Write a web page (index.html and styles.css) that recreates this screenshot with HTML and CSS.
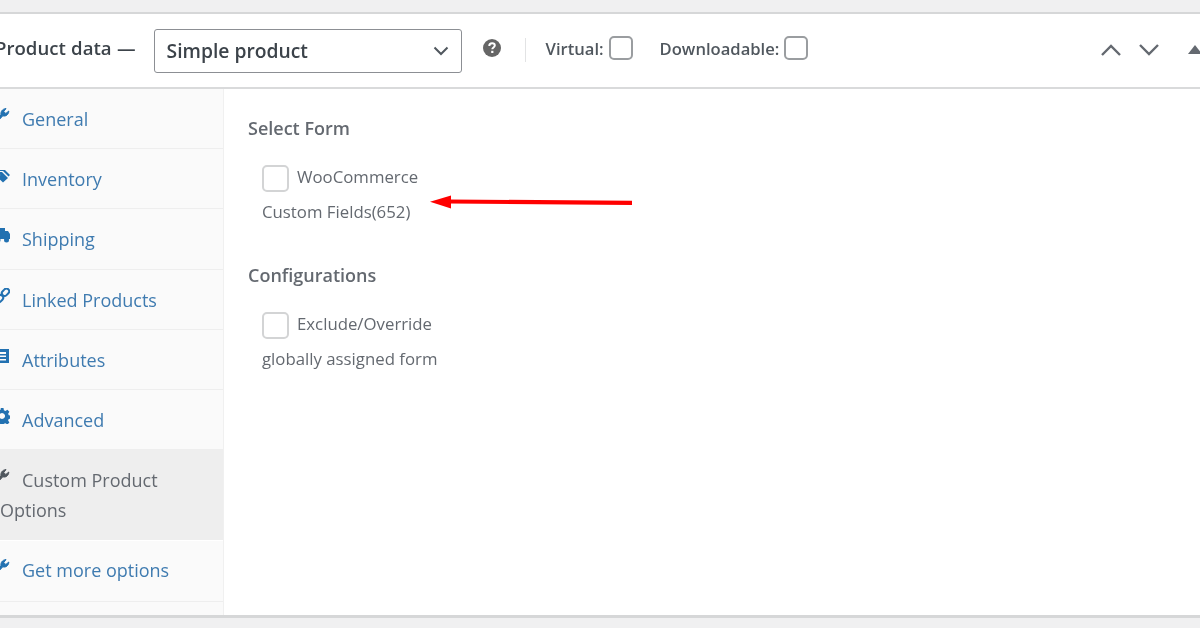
FILE: index.html
```html
<!DOCTYPE html>
<html lang="en">
<head>
<meta charset="utf-8">
<title>Product data</title>
<link rel="stylesheet" href="styles.css">
</head>
<body>
<div class="shot">
  <section class="panel">
    <header class="bar">
      <h2 class="bar-title">Product data —</h2>
      <div class="select">
        <span class="select-value">Simple product</span>
        <svg class="select-caret" viewBox="0 0 16 10" width="16" height="10"><path d="M1.500 1.500 8 8l6.500-6.500" fill="none" stroke="#50575e" stroke-width="2"/></svg>
      </div>
      <svg class="help" viewBox="0 0 18 18" width="18" height="18"><circle cx="9" cy="9" r="9" fill="#666"/><path d="M6.300 7c0-1.700 1.200-2.700 2.800-2.700s2.700 1 2.700 2.300c0 1.800-2.500 1.900-2.500 3.600" fill="none" stroke="#fff" stroke-width="2"/><rect x="8.200" y="11.800" width="2.200" height="2.200" fill="#fff"/></svg>
      <span class="bar-sep"></span>
      <label class="check-label">Virtual:<span class="box"></span></label>
      <label class="check-label second">Downloadable:<span class="box"></span></label>
      <div class="arrows">
        <svg viewBox="0 0 22 14" width="22" height="14"><path d="M2 12 11 3l9 9" fill="none" stroke="#646970" stroke-width="2.400"/></svg>
        <svg viewBox="0 0 22 14" width="22" height="14"><path d="M2 2l9 9 9-9" fill="none" stroke="#646970" stroke-width="2.400"/></svg>
        <svg class="arrow-toggle" viewBox="0 0 14 10" width="14" height="10"><path d="M7 0l7 9H0z" fill="#646970"/></svg>
      </div>
    </header>
    <div class="body">
      <nav class="tabs">
        <a class="tab"><svg class="ico wrench" viewBox="0 0 16 16"><path d="M1 14 7 8c-.6-3 1-6 5-6.500L9.800 4.500l2 2 3-2.500c0 3.500-3 5.800-6 4.800L3 15z"/></svg>General</a>
        <a class="tab"><svg class="ico" viewBox="0 0 16 16"><path d="M6 3h5l5 5-1.500 1.500L9 4H6zM2 5h6l6 6-5 4.500L2 9zm3 1.800a1.200 1.200 0 1 0 .01 0z" fill-rule="evenodd"/></svg>Inventory</a>
        <a class="tab"><svg class="ico" viewBox="0 0 16 16"><path d="M0 1h11v11H0zM11 4h3l2 3v5h-5z"/><circle cx="4" cy="13" r="2.500"/><circle cx="12.500" cy="13" r="2.500"/></svg>Shipping</a>
        <a class="tab"><svg class="ico" viewBox="0 0 16 16"><g fill="none" stroke="#2271b1" stroke-width="2"><rect x="7.500" y="1.500" width="8" height="5.500" rx="2.700" transform="rotate(-45 11.500 4.200)"/><rect x="1.500" y="8" width="8" height="5.500" rx="2.700" transform="rotate(-45 5.500 10.700)"/></g></svg>Linked Products</a>
        <a class="tab"><svg class="ico" viewBox="0 0 16 16"><path d="M1 1h14v14H1zm3 3v2h8V4zm0 3.500v1.500h8V7.500zM4 11v1.500h8V11z" fill-rule="evenodd"/></svg>Attributes</a>
        <a class="tab"><svg class="ico" viewBox="0 0 16 16"><path d="M6.500 0h3l.4 2.300 1.500.7 2-1.300 2 2-1.300 2 .7 1.500 2.200.4v3l-2.300.4-.6 1.500 1.300 2-2 2-2-1.300-1.500.6-.4 2.300h-3l-.4-2.300-1.500-.6-2 1.300-2-2 1.300-2-.6-1.500L0 9.500v-3l2.300-.4.600-1.500-1.300-2 2-2 2 1.300 1.500-.7zM8 5a3 3 0 1 0 .01 0z" fill-rule="evenodd"/></svg>Advanced</a>
        <a class="tab tab-active"><svg class="ico ico-dark wrench" viewBox="0 0 16 16"><path d="M1 14 7 8c-.6-3 1-6 5-6.500L9.800 4.500l2 2 3-2.500c0 3.500-3 5.800-6 4.800L3 15z"/></svg>Custom Product Options</a>
        <a class="tab"><svg class="ico wrench" viewBox="0 0 16 16"><path d="M1 14 7 8c-.6-3 1-6 5-6.500L9.800 4.500l2 2 3-2.500c0 3.500-3 5.800-6 4.800L3 15z"/></svg>Get more options</a>
      </nav>
      <main class="content">
        <h3 class="group-title">Select Form</h3>
        <label class="option"><span class="box light"></span><span>WooCommerce</span></label>
        <p class="option-note">Custom Fields(652)</p>
        <h3 class="group-title second-group">Configurations</h3>
        <label class="option"><span class="box light"></span><span>Exclude/Override</span></label>
        <p class="option-note">globally assigned form</p>
        <svg class="red-arrow" viewBox="0 0 204 16" width="204" height="16"><path d="M20 5.500 203 6.700v4.300L20 9.500z" fill="#f00"/><path d="M1 7.700 22 1.500v13z" fill="#f00"/></svg>
      </main>
    </div>
  </section>
</div>
</body>
</html>
```
FILE: styles.css
```css
* { box-sizing: border-box; }
html, body { margin: 0; height: 100%; }
body {
  background: #f0f0f1;
  overflow: hidden;
  font-family: "Open Sans", "Noto Sans", sans-serif;
  color: #50575e;
}
.shot {
  width: 1230px;
  height: 628px;
  margin-left: -10px;
  padding-top: 12px;
  filter: blur(0.55px);
}
.panel {
  height: 606px;
  background: #fff;
  border-top: 2px solid #d6d7d8;
  border-bottom: 3px solid #d6d7d8;
  display: flex;
  flex-direction: column;
}
.bar {
  height: 75px;
  flex: none;
  border-bottom: 2px solid #d9dadb;
  display: flex;
  align-items: center;
  padding-left: 5px;
}
.bar-title {
  margin: 0 18px 6px 0;
  font-size: 18.600px;
  font-weight: 600;
  word-spacing: 0.5px;
  color: #3c434a;
  white-space: nowrap;
}
.select {
  width: 308px;
  height: 44px;
  flex: none;
  margin-top: 1px;
  border: 1.500px solid #8c8f94;
  border-radius: 3px;
  display: flex;
  align-items: center;
  justify-content: space-between;
  padding: 0 12px;
  font-size: 19.300px;
  font-weight: 600;
  color: #3c434a;
}
.select-value { margin-bottom: 2px; }
.help { margin: 0 0 6px 21px; flex: none; }
.bar-sep {
  width: 1px;
  height: 24px;
  margin: 0 20px 2px 24px;
  background: #e2e3e4;
}
.check-label {
  display: flex;
  align-items: center;
  gap: 5px;
  font-size: 16.600px;
  font-weight: 600;
  color: #50575e;
  margin-bottom: 5px;
  white-space: nowrap;
}
.second { margin-left: 27px; }
.box {
  width: 24px;
  height: 24px;
  flex: none;
  border: 2px solid #9a9da0;
  border-radius: 5px;
  background: #fff;
}
.box.light { border-color: #d3d4d5; width: 27px; height: 27px; }
.arrows {
  margin-left: auto;
  display: flex;
  align-items: center;
  gap: 16px;
  padding-right: 18px;
  margin-bottom: 2px;
}
.arrow-toggle { margin-left: 12px; }
.body { flex: 1; display: flex; min-height: 0; }
.tabs {
  width: 234px;
  flex: none;
  background: #fafafa;
  border-right: 1px solid #f0f0f0;
  display: flex;
  flex-direction: column;
}
.tab {
  min-height: 60.200px;
  padding: 15px 12px 14px 10px;
  line-height: 30px;
  font-size: 18px;
  color: #3f7bb0;
  border-bottom: 1px solid #eeeeee;
}
.tab-active {
  min-height: 91.200px;
  background: #eeeeee;
  color: #646970;
  border-bottom-color: #fff;
}
.tab-active + .tab { padding-top: 14px; }
.ico {
  width: 16px;
  height: 16px;
  margin: 0 12px 0 -6px;
  vertical-align: 3px;
  fill: #2271b1;
}
.wrench { stroke: #2271b1; stroke-width: 1; }
.ico-dark { fill: #50575e; stroke: #50575e; }
.content {
  flex: 1;
  position: relative;
  padding: 27px 0 0 24px;
  font-size: 16.800px;
  color: #646970;
}
.group-title {
  margin: 0 0 25px;
  font-size: 18px;
  line-height: 24px;
  font-weight: 600;
  color: #646970;
}
.second-group { margin-top: 39px; }
.option {
  display: flex;
  align-items: flex-start;
  gap: 8px;
  margin-left: 14px;
  height: 27px;
  line-height: 24px;
}
.option-note {
  margin: 8px 0 0 14px;
  line-height: 24px;
}
.red-arrow {
  position: absolute;
  left: 205px;
  top: 105px;
}
```
